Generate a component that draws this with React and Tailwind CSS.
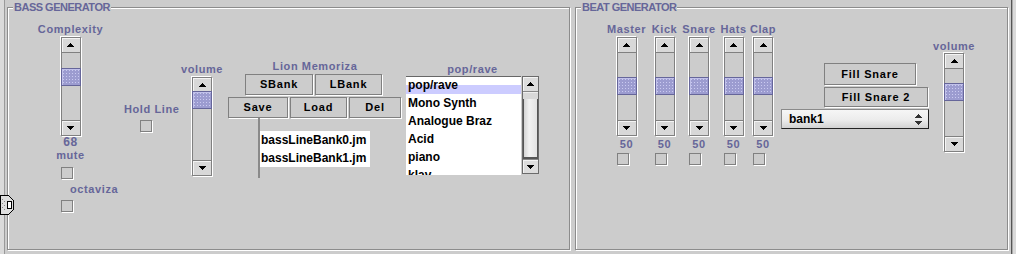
import React from "react";

function Up() {
  return (
    <svg width="7" height="4" viewBox="0 0 7 4" shapeRendering="crispEdges">
      <polygon points="3.5,0 7,4 0,4" fill="#000" />
    </svg>
  );
}
function Down() {
  return (
    <svg width="7" height="4" viewBox="0 0 7 4" shapeRendering="crispEdges">
      <polygon points="0,0 7,0 3.5,4" fill="#000" />
    </svg>
  );
}

function Label({ children, className = "" }) {
  return (
    <div
      className={
        "text-[11px] leading-[11px] font-bold tracking-[0.6px] text-[#666699] whitespace-nowrap " +
        className
      }
    >
      {children}
    </div>
  );
}

function VScroll({ thumb, className = "" }) {
  return (
    <div
      className={
        "flex flex-col w-[20px] h-[99px] border border-[#808080] bg-[#cccccc] shadow-[1px_1px_0_#fff,-1px_-1px_0_#fff] " +
        className
      }
    >
      <div className="h-[15px] shrink-0 border-b border-[#808080] bg-[#d8d8d8] shadow-[inset_1px_1px_0_#f4f4f4] flex items-center justify-center">
        <Up />
      </div>
      <div className="flex-1 flex flex-col">
        <div
          className={
            "h-[18px] -mx-[1px] border border-[#66669a] bg-[#9c9cd0] bg-[radial-gradient(circle,#cacaf0_0.7px,transparent_0.9px)] bg-[length:3px_3px] shadow-[inset_1px_1px_0_#c0c0ea] " +
            thumb
          }
        />
      </div>
      <div className="h-[15px] shrink-0 border-t border-[#808080] bg-[#d8d8d8] shadow-[inset_1px_1px_0_#f4f4f4] flex items-center justify-center">
        <Down />
      </div>
    </div>
  );
}

function Check({ className = "" }) {
  return (
    <div
      className={
        "w-[12px] h-[12px] border border-[#808080] bg-[#cccccc] shadow-[1px_1px_0_#fff] " +
        className
      }
    />
  );
}

function Btn({ children, className = "" }) {
  return (
    <div
      className={
        "shrink-0 border border-[#808080] bg-[#cccccc] shadow-[1px_1px_0_#fff] flex items-center justify-center text-[11px] leading-[11px] font-bold tracking-[0.8px] text-black whitespace-nowrap " +
        className
      }
    >
      {children}
    </div>
  );
}

function Panel({ title, className = "", children }) {
  return (
    <div
      className={
        "relative shrink-0 h-[243px] border border-[#8c8c8c] shadow-[inset_1px_1px_0_#fff,1px_1px_0_#fff] flex items-start " +
        className
      }
    >
      <span className="absolute left-[5px] -top-[6px] px-[1px] bg-[#cccccc] text-[11px] leading-[11px] font-bold tracking-[-0.5px] text-[#666699] whitespace-nowrap">
        {title}
      </span>
      {children}
    </div>
  );
}

function Slider({ name, w, ml }) {
  return (
    <div className={"flex flex-col items-center " + w + " " + ml}>
      <Label>{name}</Label>
      <VScroll className="mt-[2px]" thumb="mt-[24px]" />
      <div className="mt-[3px] text-[11px] leading-[11px] font-bold tracking-[0.6px] text-[#666699]">
        50
      </div>
      <div className="w-[20px] mt-[3px]">
        <Check />
      </div>
    </div>
  );
}

export default function App() {
  const presets = ["pop/rave", "Mono Synth", "Analogue Braz", "Acid", "piano", "klav"];
  return (
    <div className="w-[1016px] h-[254px] bg-[#cccccc] flex relative overflow-hidden font-['Liberation_Sans',Arial,sans-serif]">
      <div className="w-[5px] h-full shrink-0 bg-[#dadada] border-r border-[#9a9a9a]" />
      <div className="flex pt-[7px] pl-[2px]">
        {/* BASS GENERATOR */}
        <Panel title="BASS GENERATOR" className="w-[563px]">
          {/* Complexity column */}
          <div className="ml-[30px] mt-[16px] w-[65px] flex flex-col items-center">
            <Label>Complexity</Label>
            <VScroll className="mt-[2px]" thumb="mt-[15px]" />
            <div className="mt-[1px] text-[12px] leading-[11px] font-bold tracking-[0.6px] text-[#666699]">
              68
            </div>
            <Label className="mt-[2px]">mute</Label>
            <Check className="self-start ml-[23px] mt-[6px]" />
            <Label className="self-start ml-[32px] mt-[5px]">octaviza</Label>
            <Check className="self-start ml-[23px] mt-[5px]" />
          </div>
          {/* Hold Line */}
          <div className="ml-[21px] mt-[96px] w-[52px] flex flex-col">
            <Label className="text-center">Hold Line</Label>
            <Check className="ml-[16px] mt-[5px]" />
          </div>
          {/* volume */}
          <div className="ml-[6px] mt-[56px] w-[40px] flex flex-col items-center">
            <Label>volume</Label>
            <VScroll className="mt-[2px]" thumb="-mt-[2px]" />
          </div>
          {/* Lion Memoriza */}
          <div className="ml-[6px] mt-[53px] w-[174px] flex flex-col">
            <Label className="text-center">Lion Memoriza</Label>
            <div className="flex gap-[2px] ml-[17px] mt-[2px]">
              <Btn className="w-[68px] h-[21px]">SBank</Btn>
              <Btn className="w-[67px] h-[21px]">LBank</Btn>
            </div>
            <div className="flex gap-[2px] mt-[2px]">
              <Btn className="w-[60px] h-[21px]">Save</Btn>
              <Btn className="w-[57px] h-[21px]">Load</Btn>
              <Btn className="w-[52px] h-[21px]">Del</Btn>
            </div>
            <div className="flex ml-[30px]">
              <div className="w-[2px] h-[60px] bg-[#8a8a8a]" />
              <div className="mt-[13px] flex flex-col">
                {["bassLineBank0.jm", "bassLineBank1.jm"].map((t) => (
                  <div
                    key={t}
                    className="w-[110px] h-[18px] bg-white pl-[1px] text-[12px] leading-[18px] font-bold text-black whitespace-nowrap"
                  >
                    {t}
                  </div>
                ))}
              </div>
            </div>
          </div>
          {/* pop/rave list */}
          <div className="ml-[4px] mt-[56px] w-[133px] flex flex-col">
            <Label className="text-center">pop/rave</Label>
            <div className="flex mt-[1px]">
              <div className="w-[116px] h-[99px] bg-white overflow-hidden border-t border-[#666] flex flex-col">
                {presets.map((p, i) => (
                  <div
                    key={p}
                    className={
                      "h-[18px] shrink-0 pl-[2px] text-[12px] leading-[18px] font-bold text-black whitespace-nowrap " +
                      (i === 0
                        ? "bg-[linear-gradient(to_bottom,#ffffff_9px,#ccccff_9px)] -mt-[1px]"
                        : "")
                    }
                  >
                    {p}
                  </div>
                ))}
              </div>
              <div className="ml-[1px] w-[17px] h-[98px] border border-[#6b6b6b] bg-[#d0d0d0] flex flex-col">
                <div className="h-[15px] shrink-0 border-b border-[#888] bg-[#dcdcdc] shadow-[inset_1px_1px_0_#f4f4f4] flex items-center justify-center">
                  <Up />
                </div>
                <div className="h-[7px] shrink-0 bg-[#d8d8d8] shadow-[inset_0_1px_0_#eee]" />
                <div className="h-[60px] shrink-0 border-x border-b-2 border-[#555] bg-[linear-gradient(to_right,#d4d4d4,#f2f2f2_40%,#e2e2e2)]" />
                <div className="flex-1 border-t border-[#888] bg-[#dcdcdc] shadow-[inset_1px_1px_0_#f4f4f4] flex items-center justify-center">
                  <Down />
                </div>
              </div>
            </div>
          </div>
        </Panel>

        {/* BEAT GENERATOR */}
        <Panel title="BEAT GENERATOR" className="ml-[5px] w-[433px]">
          <div className="ml-[31px] mt-[16px] flex">
            <Slider name="Master" w="w-[39px]" ml="" />
            <Slider name="Kick" w="w-[25px]" ml="ml-[6px]" />
            <Slider name="Snare" w="w-[32px]" ml="ml-[6px]" />
            <Slider name="Hats" w="w-[23px]" ml="ml-[7px]" />
            <Slider name="Clap" w="w-[24px]" ml="ml-[6px]" />
          </div>
          <div className="ml-[6px] mt-[55px] w-[148px] flex flex-col">
            <Btn className="ml-[43px] w-[92px] h-[22px]">Fill Snare</Btn>
            <Btn className="ml-[43px] mt-[2px] w-[104px] h-[20px]">Fill Snare 2</Btn>
            <div className="mt-[2px] w-[148px] h-[20px] border border-t-[#8a8a8a] border-l-[#8a8a8a] border-r-[#222] border-b-[#222] bg-[linear-gradient(to_bottom,#f6f6f6,#ececec_55%,#d2d2d2)] flex items-center pl-[7px] pr-[6px] text-[12px] leading-[12px] font-bold text-black">
              <span>bank1</span>
              <svg className="ml-auto" width="7" height="11" viewBox="0 0 7 11" shapeRendering="crispEdges">
                <polygon points="3.5,0 7,4 0,4" fill="#333" />
                <polygon points="0,7 7,7 3.5,11" fill="#333" />
              </svg>
            </div>
          </div>
          <div className="ml-[5px] mt-[33px] w-[40px] flex flex-col items-center">
            <Label>volume</Label>
            <VScroll className="mt-[1px]" thumb="mt-[14px]" />
          </div>
        </Panel>
      </div>
      <div className="ml-auto flex shrink-0">
        <div className="w-[1px] h-full bg-[#555]" />
        <div className="w-[4px] h-full bg-[#dadada] border-l border-[#aaa]" />
      </div>

      {/* split pane handle */}
      <svg
        className="absolute left-0 top-[195px]"
        width="15"
        height="21"
        viewBox="0 0 15 21"
        shapeRendering="crispEdges"
      >
        <polygon
          points="0,0.5 8.5,0.5 13.5,5.5 13.5,14.5 8.5,19.5 0,19.5"
          fill="#dedede"
          stroke="#000"
        />
        <rect x="2" y="4" width="1" height="1" fill="#888" />
        <rect x="4" y="6" width="1" height="1" fill="#888" />
        <rect x="2" y="8" width="1" height="1" fill="#888" />
        <rect x="4" y="10" width="1" height="1" fill="#888" />
        <rect x="2" y="12" width="1" height="1" fill="#888" />
        <rect x="4" y="14" width="1" height="1" fill="#888" />
        <rect x="7.5" y="6.5" width="4" height="7" fill="#fff" stroke="#000" />
      </svg>
    </div>
  );
}
